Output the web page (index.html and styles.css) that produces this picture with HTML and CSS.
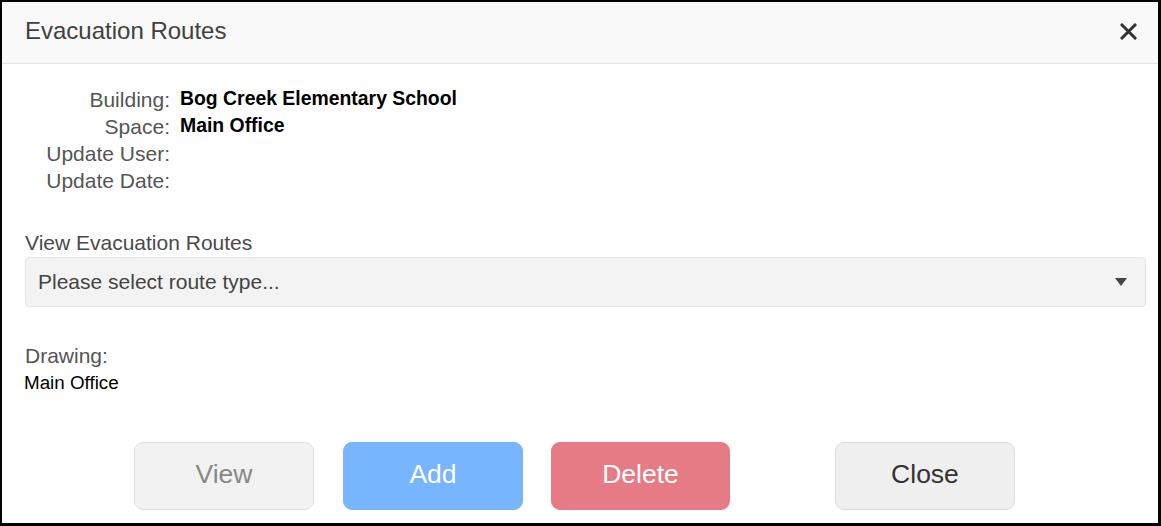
FILE: index.html
```html
<!DOCTYPE html>
<html>
<head>
<meta charset="utf-8">
<title>Evacuation Routes</title>
<link rel="stylesheet" href="styles.css">
</head>
<body>
<div class="modal">
  <div class="modal-header">
    <h1 class="modal-title">Evacuation Routes</h1>
    <button class="close-x" aria-label="Close">
      <svg width="17" height="17" viewBox="0 0 17 17"><path d="M2 2 L15 15 M15 2 L2 15" stroke="#333" stroke-width="3" stroke-linecap="square"/></svg>
    </button>
  </div>
  <div class="modal-body">
    <div class="info-grid">
      <div class="info-label">Building:</div><div class="info-value">Bog Creek Elementary School</div>
      <div class="info-label">Space:</div><div class="info-value">Main Office</div>
      <div class="info-label">Update User:</div><div class="info-value"></div>
      <div class="info-label">Update Date:</div><div class="info-value"></div>
    </div>
    <div class="field">
      <div class="field-label">View Evacuation Routes</div>
      <div class="select">
        <span class="select-text">Please select route type...</span>
        <svg class="select-arrow" width="12" height="8" viewBox="0 0 12 8"><path d="M0 0 H12 L6 8 Z" fill="#444"/></svg>
      </div>
    </div>
    <div class="drawing">
      <div class="field-label">Drawing:</div>
      <div class="drawing-name">Main Office</div>
    </div>
  </div>
  <div class="modal-footer">
    <button class="btn btn-view">View</button>
    <button class="btn btn-add">Add</button>
    <button class="btn btn-delete">Delete</button>
    <button class="btn btn-close">Close</button>
  </div>
</div>
</body>
</html>
```
FILE: styles.css
```css
html, body {
  margin: 0;
  padding: 0;
  background: #fff;
}
body {
  font-family: "Liberation Sans", Arial, sans-serif;
  width: 1161px;
  height: 526px;
  overflow: hidden;
}
.modal {
  box-sizing: border-box;
  width: 1161px;
  height: 526px;
  border-style: solid;
  border-color: #000;
  border-width: 2px 3px 3px 2px;
  display: flex;
  flex-direction: column;
  background: #fff;
}
.modal-header {
  height: 61px;
  background: #f9f9f9;
  border-bottom: 1px solid #e3e3e3;
  display: flex;
  align-items: center;
  justify-content: space-between;
  padding: 0 21px 0 23px;
}
.modal-title {
  margin: 0;
  font-size: 24px;
  font-weight: normal;
  color: #404040;
  padding-bottom: 4px;
}
.close-x {
  border: 0;
  background: none;
  padding: 0;
  width: 17px;
  height: 17px;
  display: block;
  margin-bottom: 2px;
}
.close-x svg { display: block; }
.modal-body {
  padding: 22px 12px 0 23px;
}
.info-grid {
  display: grid;
  grid-template-columns: 145px auto;
  column-gap: 10px;
  grid-auto-rows: 27px;
}
.info-label {
  text-align: right;
  font-size: 21px;
  color: #555;
  line-height: 27px;
}
.info-value {
  font-size: 19.4px;
  font-weight: bold;
  color: #000;
  line-height: 24px;
}
.field {
  margin-top: 37px;
}
.field-label {
  font-size: 21px;
  color: #4a4a4a;
  line-height: 24px;
}
.select {
  box-sizing: border-box;
  margin-top: 2px;
  height: 50px;
  background: #f3f3f3;
  border: 1px solid #e4e4e4;
  border-radius: 4px;
  display: flex;
  align-items: center;
  justify-content: space-between;
  padding: 0 18px 0 12px;
}
.select-text {
  font-size: 21px;
  color: #444;
}
.select-arrow { display: block; }
.drawing {
  margin-top: 37px;
}
.drawing .field-label {
  color: #555;
}
.drawing-name {
  font-size: 18.8px;
  color: #000;
  margin-left: -1px;
  margin-top: 2px;
  line-height: 26px;
}
.modal-footer {
  margin-top: auto;
  display: flex;
  padding: 0 0 13px 132px;
}
.btn {
  box-sizing: border-box;
  width: 180px;
  height: 68px;
  border-radius: 9px;
  border: 1px solid transparent;
  font-family: "Liberation Sans", Arial, sans-serif;
  font-size: 26.5px;
  padding: 0 0 4px 0;
}
.btn-view {
  background: #f2f2f2;
  border-color: #e2e2e2;
  color: #888;
}
.btn-add {
  margin-left: 29px;
  background: #77b5fe;
  border-color: #77b5fe;
  color: #fff;
}
.btn-delete {
  margin-left: 28px;
  width: 179px;
  background: #e77b85;
  border-color: #e77b85;
  color: #fff;
}
.btn-close {
  margin-left: 105px;
  background: #efefef;
  border-color: #dcdcdc;
  color: #333;
}
```
